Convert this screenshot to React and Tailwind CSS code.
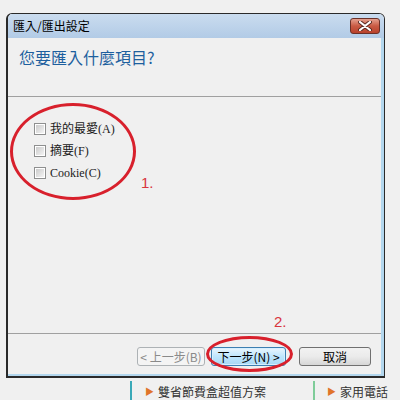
import React from "react";

const sans = { fontFamily: '"Noto Sans CJK TC", "Liberation Sans", sans-serif' };

function Checkbox({ label }) {
  return (
    <div className="flex items-center h-[22px]">
      <div className="w-[12px] h-[12px] border border-[#8e8f8f] bg-white p-[1px]">
        <div className="w-full h-full bg-gradient-to-br from-[#cbcbcb] to-[#f4f4f4]" />
      </div>
      <span
        className="ml-[4px] text-[12px] leading-none text-[#1a1a1a] font-normal"
        style={{ fontFamily: '"Liberation Serif", "Noto Sans CJK TC", serif' }}
      >
        {label}
      </span>
    </div>
  );
}

export default function App() {
  return (
    <div className="relative w-[400px] h-[400px] overflow-hidden bg-[#f0f0f0]" style={sans}>
      <div className="pt-[13px] pl-[6px]">
        {/* Window */}
        <div className="w-[379px] h-[365px] flex flex-col border-t border-l-2 border-r border-b-2 border-[#2a2a2a] rounded-t-[6px] overflow-hidden bg-[#f0f0f0]">
          {/* Title bar */}
          <div className="h-[24px] shrink-0 flex items-center justify-between bg-gradient-to-b from-[#cadcef] to-[#b2cbe6] pl-[5px] pr-[4px]">
            <span className="text-[12px] leading-none text-black">匯入/匯出設定</span>
            <div className="w-[30px] h-[16px] rounded-[3px] border border-[#6b3128] bg-gradient-to-b from-[#e4a08f] via-[#c95a43] to-[#b8422c] flex items-center justify-center">
              <svg width="14" height="10" viewBox="0 0 14 10">
                <path d="M2 1 L12 9 M12 1 L2 9" stroke="#5a2a22" strokeWidth="4" strokeLinecap="round" />
                <path d="M2 1 L12 9 M12 1 L2 9" stroke="#ffffff" strokeWidth="2.2" strokeLinecap="round" />
              </svg>
            </div>
          </div>
          {/* Body */}
          <div className="flex-1 flex flex-col border-r-[3px] border-b-[2px] border-[#b3d7ee]">
            <div className="h-[59px] shrink-0 border-b border-[#a0a0a0] pl-[11px] pt-[7px]">
              <span className="text-[16px] leading-[20px] text-[#1d5f9e]">您要匯入什麼項目?</span>
            </div>
            <div className="pl-[26px] pt-[21px] flex flex-col">
              <Checkbox label="我的最愛(A)" />
              <Checkbox label="摘要(F)" />
              <Checkbox label="Cookie(C)" />
            </div>
            <div className="flex-1" />
            <div className="h-[41px] shrink-0 border-t border-[#a0a0a0] flex items-start justify-end pt-[13px] pr-[10px]">
              <div className="w-[68px] h-[19px] rounded-[3px] border border-[#adb2b5] bg-[#f4f4f4] flex items-center justify-center text-[12px] leading-none text-[#8a8a8a] whitespace-nowrap">
                &lt; 上一步(B)
              </div>
              <div className="ml-[6px] w-[75px] h-[19px] rounded-[3px] border border-[#3c7fb1] bg-gradient-to-b from-[#eaf6fd] via-[#bee6fd] to-[#a7d9f5] flex items-center justify-center text-[12px] leading-none text-black shadow-[inset_0_0_0_1px_#d6efff] whitespace-nowrap">
                下一步(N) &gt;
              </div>
              <div className="ml-[13px] w-[72px] h-[19px] rounded-[3px] border border-[#707070] bg-gradient-to-b from-[#f2f2f2] via-[#ebebeb] to-[#d6d6d6] flex items-center justify-center text-[12px] leading-none text-black">
                取消
              </div>
            </div>
          </div>
        </div>
        {/* Bottom strip of page */}
        <div className="flex items-start h-[22px] pt-[3px] text-[12px] leading-none text-[#333] whitespace-nowrap">
          <div className="ml-[124px] shrink-0 w-[2px] h-[19px] bg-[#3aa9b8]" />
          <span className="ml-[13px] mt-[6px] text-[#e0742a] text-[9px]">▶</span>
          <span className="ml-[4px] mt-[5px]">雙省節費盒超值方案</span>
          <div className="ml-[47px] shrink-0 w-[2px] h-[19px] bg-[#7fcc99]" />
          <span className="ml-[12px] mt-[6px] text-[#e0742a] text-[9px]">▶</span>
          <span className="ml-[4px] mt-[5px]">家用電話</span>
        </div>
      </div>

      {/* Red annotations */}
      <div className="absolute left-[10px] top-[103px] w-[126px] h-[97px] rounded-[50%] border-[3px] border-[#d8202c]" />
      <div className="absolute left-[141px] top-[175px] text-[15px] leading-none text-[#d8353d]" style={{ fontFamily: '"Liberation Sans", sans-serif' }}>1.</div>
      <div className="absolute left-[206px] top-[336px] w-[87px] h-[36px] rounded-[50%] border-[3px] border-[#d8202c]" />
      <div className="absolute left-[274px] top-[314px] text-[15px] leading-none text-[#d8353d]" style={{ fontFamily: '"Liberation Sans", sans-serif' }}>2.</div>
    </div>
  );
}
